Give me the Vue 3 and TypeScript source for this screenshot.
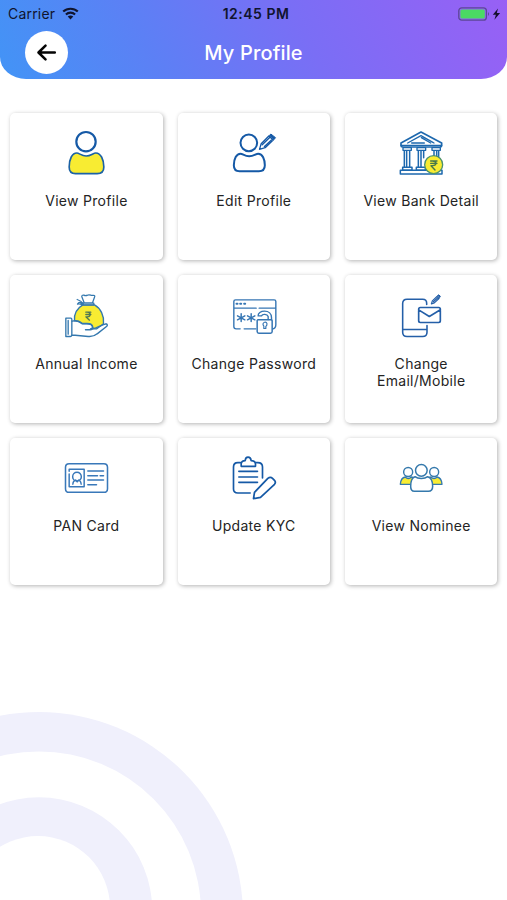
<script setup lang="ts">
import { ref } from 'vue'

interface Shape {
  d: string
  w?: number
  fill?: string
  stroke?: string
}

interface Tile {
  label: string
  box: string
  color: string
  shapes: Shape[]
}

const yellow = '#f8ec32'
const navy = '#1559a6'

const circle = (x: number, y: number, r: number): string =>
  `M${x - r} ${y}a${r} ${r} 0 1 0 ${2 * r} 0a${r} ${r} 0 1 0 ${-2 * r} 0z`

const tiles = ref<Tile[]>([
  {
    label: 'View Profile',
    box: '192.5 78 132 132',
    color: '#1c62a5',
    shapes: [
      { d: circle(258.5, 110, 29), w: 6.5, stroke: navy },
      {
        d: 'M231 144c7 0 14 9 28 9s21-9 29-9c15 0 24 20 24 42 0 14-7 20-20 20h-65c-13 0-19-7-19-20 0-24 9-42 23-42z',
        w: 5,
        fill: yellow
      }
    ]
  },
  {
    label: 'Edit Profile',
    box: '185.5 78 132 132',
    color: navy,
    shapes: [
      { d: circle(236, 113.5, 25), w: 6 },
      {
        d: 'M211 146c7 0 12 8 26 8s20-8 27-8c13 0 20 17 20 35 0 12-6 18-18 18h-58c-12 0-17-6-17-18 0-20 8-35 20-35z',
        w: 6
      },
      { d: 'M268 133l5-17 23-23 13 12-24 23z', w: 4 },
      { d: 'M276 119l24-23M283 125l21-20', w: 4.5 },
      { d: 'M298 91l4-4 14 11-5 6z', w: 3, fill: navy }
    ]
  },
  {
    label: 'View Bank Detail',
    box: '187 78 132 132',
    color: '#1d68ae',
    shapes: [
      { d: 'M193 121v-7l60-33 62 33v7c0 3-2 5-5 5H198c-3 0-5-2-5-5z', w: 5 },
      { d: 'M193 121h122M213 114l40-22 39 22M225 114h38M254 98l28 16M258 95l32 18', w: 4 },
      { d: 'M199 128h25v8h-25zM241 128h26v8h-26zM286 128h25v8h-25z', w: 4 },
      { d: 'M203 138v48M210 138v48M219 138v48M245 138v48M253 138v48M261 138v20M292 138v16M300 138v18M306 138v22', w: 4.5 },
      { d: 'M198 187h28v8h-28zM239 187h27v8h-27zM191 196h125v11H191z', w: 4.5 },
      { d: circle(291, 179, 27), w: 4, fill: yellow, stroke: '#4b906e' },
      { d: 'M282 168h19M282 175h19M282 168h6c13 0 13 14 0 14h-5l12 13', w: 4.2, stroke: '#48784b' }
    ]
  },
  {
    label: 'Annual Income',
    box: '192.5 70.5 132 132',
    color: '#3478ae',
    shapes: [
      { d: 'M249 103c-17 10-27 27-25 48 9-1 17 2 24 8h13c11 0 17 5 17 11 0 2-3 4-6 5h19l20-15c3-24-9-47-27-57z', w: 4, fill: yellow },
      { d: 'M253 97l-7-18c-1-4 2-6 6-5 4 2 7 2 11 0 3-2 7-1 10 0 3 2 8-1 11 1 2 1 1 3 0 5l-6 17zM250 98h32v6h-32zM249 102c-8-9-12-8-16-1 7-2 11 1 14 3M249 98c-5-7-11-9-17-11', w: 3.8 },
      { d: 'M198 143h15c2 0 3 2 3 4v46c0 3-1 5-4 5h-14M198 143v55M205 150v41', w: 4 },
      { d: 'M217 152c13-4 21 0 30 8h14c12 0 18 5 18 12 0 4-3 6-8 6h-14M277 175c15-1 24-11 41-15 5 0 6 5 2 8l-28 22c-8 7-17 9-27 8l-39-4h-10', w: 4.3 },
      { d: 'M258 125h15M258 132h15M258 125h4c12 0 12 14 0 14h-4l11 10', w: 4, stroke: '#517852' }
    ]
  },
  {
    label: 'Change Password',
    box: '185.5 70.5 132 132',
    color: '#3676b4',
    shapes: [
      { d: 'M210 175h-12c-5 0-7-3-7-7V93c0-3 2-5 5-5h116c3 0 5 2 5 5v70c0 8-3 12-11 13M222 175h35M191 113h67M267 113h49', w: 4.2 },
      { d: 'M199 100h3M210 100h3M222 100h3', w: 6 },
      { d: 'M213 130v23M202 136l22 12M202 148l22-12M243 130v23M232 136l22 12M232 148l22-12', w: 4.4 },
      { d: 'M263 148h40c2 0 3 1 3 3v32c0 3-2 5-5 5h-35c-3 0-5-2-5-5v-33z', w: 4.5, fill: '#fff' },
      { d: 'M264 136c-1-8 8-14 19-14 13 0 21 8 21 19v7M266 136h8c3-6 17-6 20 2v9', w: 4.2 },
      { d: 'M281 174v-7c-10-12 13-18 9-3l-3 4v6z', w: 3.6 }
    ]
  },
  {
    label: 'Change\nEmail/Mobile',
    box: '187 70.5 132 132',
    color: '#245fa8',
    shapes: [
      { d: 'M270 102v-4c0-7-4-12-12-12h-47c-9 0-13 5-13 13v86c0 9 4 13 13 13h47c8 0 13-5 13-13v-20M198 177h73', w: 4.7 },
      { d: 'M251 111h55c3 0 5 2 5 5v35c0 3-2 5-5 5h-55c-3 0-5-2-5-5v-35c0-3 2-5 5-5zM246 118l32 20 33-20', w: 5 },
      { d: 'M284 100l3-9 14-13 6 6-14 13z', w: 3.5 },
      { d: 'M290 94l12-11', w: 4 },
      { d: 'M303 75l3-2 5 4-2 4z', w: 3, fill: '#245fa8' }
    ]
  },
  {
    label: 'PAN Card',
    box: '192.5 78 132 132',
    color: '#3978b9',
    shapes: [
      { d: 'M208 101h104c7 0 11 4 11 11v64c0 7-4 11-11 11H208c-7 0-11-4-11-11v-64c0-7 4-11 11-11z', w: 4.6 },
      { d: 'M208 124v-6h45v52h-45v-38', w: 4.4 },
      { d: circle(231.5, 140, 13), w: 4.4 },
      { d: 'M219 163c0-8 5-12 9-13l4 6 4-6c5 2 8 6 8 13', w: 4 },
      { d: 'M264 123h47M264 137h29M301 137h10M264 150h47M264 164h26', w: 4.6 }
    ]
  },
  {
    label: 'Update KYC',
    box: '185.5 78 132 132',
    color: navy,
    shapes: [
      { d: 'M240 189h-37c-8 0-13-4-13-12v-66c0-8 5-13 13-13h8M256 98h7c9 0 14 5 14 13v33', w: 5 },
      { d: 'M213 109v-6c0-8 4-11 12-11 1-14 16-14 18 0 8 0 13 3 13 11v6z', w: 5 },
      { d: 'M206 124h56M206 141h56M206 157h56', w: 5 },
      { d: 'M250 206l3-19 40-42c5-4 10-4 14 0l6 6c4 4 3 8 0 12l-42 39z', w: 5.2 }
    ]
  },
  {
    label: 'View Nominee',
    box: '187 78 132 132',
    color: '#3579ac',
    shapes: [
      { d: 'M191 163c1-14 8-21 15-22 5 6 13 6 18 0 10 2 13 6 12 22zM316 163c-1-14-8-21-15-22-5 6-13 6-18 0-10 2-13 6-12 22z', w: 4, fill: yellow },
      { d: circle(214.5, 126, 13.5), w: 4.2, fill: '#fff' },
      { d: circle(292.5, 126, 13.5), w: 4.2, fill: '#fff' },
      { d: 'M235 140c9 7 29 7 38 0 9 2 15 14 15 29 0 10-4 15-13 15h-42c-8 0-11-6-11-15 0-15 5-27 13-29z', w: 4.6, fill: '#fff' },
      { d: circle(254, 121, 17.5), w: 4.5, fill: '#fff' }
    ]
  }
])
</script>

<template>
  <main class="screen">
    <svg class="rings" viewBox="0 0 250 200" fill="none" aria-hidden="true">
      <circle cx="39" cy="216" r="204" fill="#f0f0fc" />
      <circle cx="39" cy="213.5" r="162" fill="#fff" />
      <circle cx="39" cy="210.5" r="113.2" fill="#f0f0fc" />
      <circle cx="38" cy="208" r="72" fill="#fff" />
    </svg>

    <header class="header">
      <div class="status">
        <div class="carrier">
          <span>Carrier</span>
          <svg class="wifi" viewBox="0 0 17 13">
            <path d="M1.2 4.6C5.2.8 11.8.8 15.8 4.6M3.9 7.4c2.6-2.4 6.6-2.4 9.2 0" fill="none" stroke="#10142e" stroke-width="2.1" />
            <path d="M5.7 9.6q2.8-2.3 5.6 0L8.5 12.5z" fill="#10142e" />
          </svg>
        </div>
        <span class="time">12:45 PM</span>
        <svg class="battery" viewBox="0 0 44 16">
          <rect x=".8" y="1.8" width="27.6" height="12.4" rx="3" fill="none" stroke="#5c4796" stroke-width="1.3" />
          <rect x="2.4" y="3.4" width="24.4" height="9.2" rx="1.6" fill="#4bd964" />
          <path d="M30 6q2 2 0 4z" fill="#5c4796" />
          <path d="M40 2.5l-5.2 6.2h3.1l-1.5 5.1 5.7-6.7h-3.3z" fill="#160f2c" />
        </svg>
      </div>
      <div class="bar">
        <button class="back" aria-label="Back">
          <svg viewBox="0 0 44 44">
            <path d="M30.5 22H14M21 15l-7.2 7 7.2 7" fill="none" stroke="#050505" stroke-width="2.6" stroke-linecap="round" stroke-linejoin="round" />
          </svg>
        </button>
        <h1>My Profile</h1>
        <span></span>
      </div>
    </header>

    <section class="grid">
      <button v-for="tile in tiles" :key="tile.label" class="tile">
        <svg class="icon" :viewBox="tile.box" fill="none" stroke-linecap="round" stroke-linejoin="round">
          <path
            v-for="(shape, i) in tile.shapes"
            :key="i"
            :d="shape.d"
            :stroke="shape.stroke ?? tile.color"
            :stroke-width="shape.w ?? 5"
            :fill="shape.fill ?? 'none'"
          />
        </svg>
        <span class="label">{{ tile.label }}</span>
      </button>
    </section>
  </main>
</template>

<style>
body {
  margin: 0;
  background: #fff;
}
</style>

<style scoped>
.screen {
  position: relative;
  box-sizing: border-box;
  height: 900px;
  overflow: hidden;
  background: #fff;
  font-family: Inter, "Liberation Sans", sans-serif;
}
.rings {
  position: absolute;
  left: 0;
  bottom: 0;
  width: 250px;
  height: 200px;
}
.header {
  box-sizing: border-box;
  height: 79px;
  border-radius: 0 0 26px 26px / 0 0 22px 22px;
  background: linear-gradient(65deg, #4294f6 0%, #5c80f5 30%, #7a6ef5 60%, #9860f5 100%);
}
.status {
  display: grid;
  grid-template-columns: 1fr auto 1fr;
  align-items: center;
  height: 27px;
  padding: 0 5px 0 8px;
  color: #10142e;
  font-size: 14px;
}
.carrier {
  display: flex;
  align-items: center;
  gap: 7px;
  letter-spacing: 0.2px;
}
.wifi {
  width: 17px;
  height: 13px;
}
.time {
  padding-left: 2px;
  font-weight: 600;
  font-size: 14px;
  letter-spacing: 0.5px;
}
.battery {
  justify-self: end;
  width: 44px;
  height: 16px;
}
.bar {
  display: grid;
  grid-template-columns: 1fr auto 1fr;
  align-items: center;
  height: 51px;
  padding: 0 25px;
}
.back {
  width: 43px;
  height: 43px;
  padding: 0;
  border: 0;
  border-radius: 50%;
  background: #fff;
}
.back svg {
  display: block;
  width: 43px;
  height: 43px;
}
h1 {
  margin: 1px 0 0;
  color: #fff;
  font-size: 20px;
  font-weight: 550;
  line-height: 24px;
  letter-spacing: 0.15px;
}
.grid {
  position: relative;
  display: grid;
  grid-template-columns: repeat(3, 1fr);
  grid-auto-rows: 147.5px;
  gap: 15px 15.2px;
  padding: 33.5px 9.7px 0 10.3px;
}
.tile {
  display: flex;
  flex-direction: column;
  align-items: center;
  justify-content: flex-start;
  padding: 18.5px 0 0;
  border: 0;
  border-radius: 5px;
  background: #fff;
  box-shadow: 1px 1px 4px rgba(0, 0, 0, 0.3);
  font-family: inherit;
}
.icon {
  width: 44px;
  height: 44px;
  overflow: visible;
}
.label {
  margin-top: 17.4px;
  color: #242424;
  font-size: 14px;
  line-height: 17px;
  letter-spacing: 0.3px;
  text-align: center;
  white-space: pre-line;
}
</style>
